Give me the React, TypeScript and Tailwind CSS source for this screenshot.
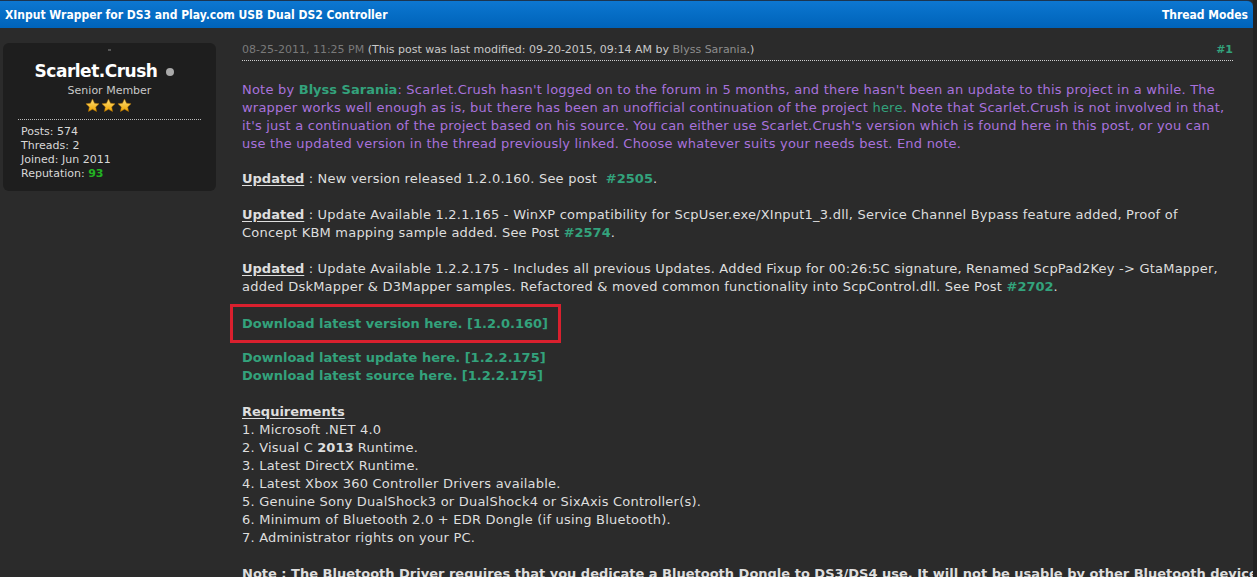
import { FC } from "react";

const Star: FC = () => (
  <svg width="15" height="15" viewBox="0 0 24 24">
    <defs>
      <linearGradient id="starGold" x1="0" y1="0" x2="0" y2="1">
        <stop offset="0" stopColor="#ffe27a" />
        <stop offset="1" stopColor="#f0a400" />
      </linearGradient>
    </defs>
    <path
      d="M12 1.5l3.2 6.8 7.3.9-5.4 5.1 1.4 7.3L12 18l-6.5 3.6 1.4-7.3L1.5 9.2l7.3-.9z"
      fill="url(#starGold)"
      stroke="#b07000"
      strokeWidth="0.8"
    />
  </svg>
);

const Green: FC<{ children: React.ReactNode; bold?: boolean }> = ({ children, bold }) => (
  <span className={`text-[#33a27c] ${bold ? "font-bold tracking-normal" : ""}`}>{children}</span>
);

const Updated: FC = () => (
  <span className="font-bold tracking-normal underline underline-offset-2">Updated</span>
);

const ProfileCard: FC = () => (
  <div className="ml-[3px] w-[213px] h-[148px] bg-[#1e1e1e] rounded-md flex flex-col">
    <div className="h-[2px] w-[3px] bg-[#555] mx-auto mt-[6px]" />
    <div className="flex items-center justify-center mt-[12px] pr-[10px]">
      <span className="text-[17px] font-bold text-white leading-none tracking-[-0.5px]">Scarlet.Crush</span>
      <span className="ml-[9px] w-[8px] h-[8px] rounded-full bg-[#aaaaaa]" />
    </div>
    <div className="text-center text-[11px] text-[#c8c8c8] mt-[5px] leading-none">Senior Member</div>
    <div className="flex justify-center gap-[1px] mt-[2px] pr-[2px]">
      <Star />
      <Star />
      <Star />
    </div>
    <div className="mx-[15px] mt-[6px] border-t border-dotted border-[#bbbbbb]" />
    <div className="pl-[18px] pt-[5px] text-[11px] leading-[14px] text-[#d8d8d8]">
      <div>Posts: 574</div>
      <div>Threads: 2</div>
      <div>Joined: Jun 2011</div>
      <div>
        Reputation: <span className="text-[#22b222] font-bold">93</span>
      </div>
    </div>
  </div>
);

const App: FC = () => {
  return (
    <div className="w-[1257px] h-[577px] overflow-hidden bg-[#2b2b2b] font-['Verdana','DejaVu_Sans',sans-serif] border-r-[4px] border-[#222]">
      <div className="h-[28px] border-t border-[#1c3550] bg-gradient-to-b from-[#0d77d1] to-[#0063b9] rounded-tr-[6px] flex items-center justify-between px-[5px] font-['DejaVu_Sans_Condensed','DejaVu_Sans',sans-serif]">
        <span className="text-white font-bold text-[12px]">
          XInput Wrapper for DS3 and Play.com USB Dual DS2 Controller
        </span>
        <span className="text-white font-bold text-[12px]">Thread Modes</span>
      </div>

      <div className="flex pt-[15px]">
        <ProfileCard />

        <div className="ml-[26px] w-[991px] text-[13px] leading-[18px] text-[#dedede] tracking-[0.22px]">
          <div className="flex items-end justify-between pb-[3px] border-b border-dotted border-[#cfcfcf] tracking-normal">
            <span className="text-[11px] leading-[14px]">
              <span className="text-[#7a7a7a]">08-25-2011, 11:25 PM</span>{" "}
              <span className="text-[#c9c9c9]">
                (This post was last modified: 09-20-2015, 09:14 AM by{" "}
                <span className="text-[#8e8e8e]">Blyss Sarania</span>.)
              </span>
            </span>
            <span className="text-[11px] leading-[14px] font-bold text-[#33a27c]">#1</span>
          </div>

          <p className="mt-[20px] text-[#a872dc]">
            Note by <Green bold>Blyss Sarania</Green>: Scarlet.Crush hasn't logged on to the forum in 5 months, and
            there hasn't been an update to this project in a while. The
            <br />
            wrapper works well enough as is, but there has been an unofficial continuation of the project{" "}
            <Green>here</Green>. Note that Scarlet.Crush is not involved in that,
            <br />
            it's just a continuation of the project based on his source. You can either use Scarlet.Crush's version
            which is found here in this post, or you can
            <br />
            use the updated version in the thread previously linked. Choose whatever suits your needs best. End note.
          </p>

          <p className="mt-[17px]">
            <Updated /> : New version released 1.2.0.160. See post&nbsp; <Green bold>#2505</Green>.
          </p>

          <p className="mt-[18px]">
            <Updated /> : Update Available 1.2.1.165 - WinXP compatibility for ScpUser.exe/XInput1_3.dll, Service
            Channel Bypass feature added, Proof of
            <br />
            Concept KBM mapping sample added. See Post <Green bold>#2574</Green>.
          </p>

          <p className="mt-[18px]">
            <Updated /> : Update Available 1.2.2.175 - Includes all previous Updates. Added Fixup for 00:26:5C
            signature, Renamed ScpPad2Key -&gt; GtaMapper,
            <br />
            added DskMapper &amp; D3Mapper samples. Refactored &amp; moved common functionality into ScpControl.dll.
            See Post <Green bold>#2702</Green>.
          </p>

          <div className="mt-[8px] -ml-[12px] w-[331px] h-[39px] border-[3px] border-[#d9202e] flex items-center pl-[9px]">
            <Green bold>Download latest version here. [1.2.0.160]</Green>
          </div>

          <div className="mt-[6px] font-bold tracking-normal text-[#33a27c]">
            <div>Download latest update here. [1.2.2.175]</div>
            <div>Download latest source here. [1.2.2.175]</div>
          </div>

          <div className="mt-[18px]">
            <div className="font-bold tracking-normal underline underline-offset-2">Requirements</div>
            <div>1. Microsoft .NET 4.0</div>
            <div>
              2. Visual C <b className="tracking-normal">2013</b> Runtime.
            </div>
            <div>3. Latest DirectX Runtime.</div>
            <div>4. Latest Xbox 360 Controller Drivers available.</div>
            <div>5. Genuine Sony DualShock3 or DualShock4 or SixAxis Controller(s).</div>
            <div>6. Minimum of Bluetooth 2.0 + EDR Dongle (if using Bluetooth).</div>
            <div>7. Administrator rights on your PC.</div>
          </div>

          <p className="mt-[18px] font-bold tracking-normal whitespace-nowrap">
            <span className="underline underline-offset-2">Note</span> : The Bluetooth Driver requires that you
            dedicate a Bluetooth Dongle to DS3/DS4 use. It will not be usable by other Bluetooth devices.
          </p>
        </div>
      </div>
    </div>
  );
};

export default App;
